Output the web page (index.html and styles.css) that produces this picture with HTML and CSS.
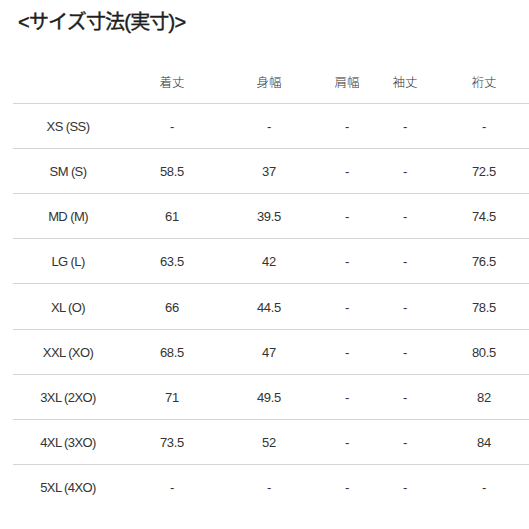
FILE: index.html
```html
<!DOCTYPE html>
<html lang="ja">
<head>
<meta charset="utf-8">
<link rel="stylesheet" href="styles.css">
</head>
<body>
<div class="page">
  <h2 class="title">&lt;サイズ寸法(実寸)&gt;</h2>
  <div class="table">
    <div class="row head"><span></span><span>着丈</span><span>身幅</span><span>肩幅</span><span>袖丈</span><span>裄丈</span></div>
    <div class="row"><span>XS (SS)</span><span>-</span><span>-</span><span>-</span><span>-</span><span>-</span></div>
    <div class="row"><span>SM (S)</span><span>58.5</span><span>37</span><span>-</span><span>-</span><span>72.5</span></div>
    <div class="row"><span>MD (M)</span><span>61</span><span>39.5</span><span>-</span><span>-</span><span>74.5</span></div>
    <div class="row"><span>LG (L)</span><span>63.5</span><span>42</span><span>-</span><span>-</span><span>76.5</span></div>
    <div class="row"><span>XL (O)</span><span>66</span><span>44.5</span><span>-</span><span>-</span><span>78.5</span></div>
    <div class="row"><span>XXL (XO)</span><span>68.5</span><span>47</span><span>-</span><span>-</span><span>80.5</span></div>
    <div class="row"><span>3XL (2XO)</span><span>71</span><span>49.5</span><span>-</span><span>-</span><span>82</span></div>
    <div class="row"><span>4XL (3XO)</span><span>73.5</span><span>52</span><span>-</span><span>-</span><span>84</span></div>
    <div class="row last"><span>5XL (4XO)</span><span>-</span><span>-</span><span>-</span><span>-</span><span>-</span></div>
  </div>
</div>
</body>
</html>
```

FILE: styles.css
```css
html, body {
  margin: 0;
  padding: 0;
  background: #fff;
  overflow: hidden;
}
.page {
  width: 529px;
  height: 529px;
  overflow: hidden;
  font-family: "Liberation Sans", "Noto Sans CJK JP", sans-serif;
  color: #333;
}
.title {
  margin: 0;
  height: 59px;
  box-sizing: border-box;
  padding: 9px 0 0 18px;
  font-size: 20px;
  line-height: 26px;
  font-weight: 400;
  color: #1e1e1e;
  -webkit-text-stroke: 0.4px #1e1e1e;
  font-family: "Liberation Sans", "Noto Sans CJK JP", sans-serif;
  letter-spacing: -0.8px;
}
.table {
  margin-left: 13px;
  width: 530px;
}
.row {
  display: grid;
  grid-template-columns: 110px 98px 96px 60px 56px 110px;
  height: 45.1px;
  box-sizing: border-box;
  border-bottom: 1px solid #d4d4d4;
  align-items: center;
  font-size: 13px;
  letter-spacing: -0.3px;
}
.row span {
  text-align: center;
  line-height: 16px;
  padding-top: 2px;
}
.row span:first-child {
  letter-spacing: -0.6px;
}
.row span:last-child {
  padding-right: 8px;
}
.head span {
  font-family: "Noto Sans CJK JP", sans-serif;
  font-weight: 300;
  font-size: 12.5px;
  letter-spacing: 0;
  color: #333;
  padding-top: 2px;
}
.last {
  border-bottom: none;
}
```
